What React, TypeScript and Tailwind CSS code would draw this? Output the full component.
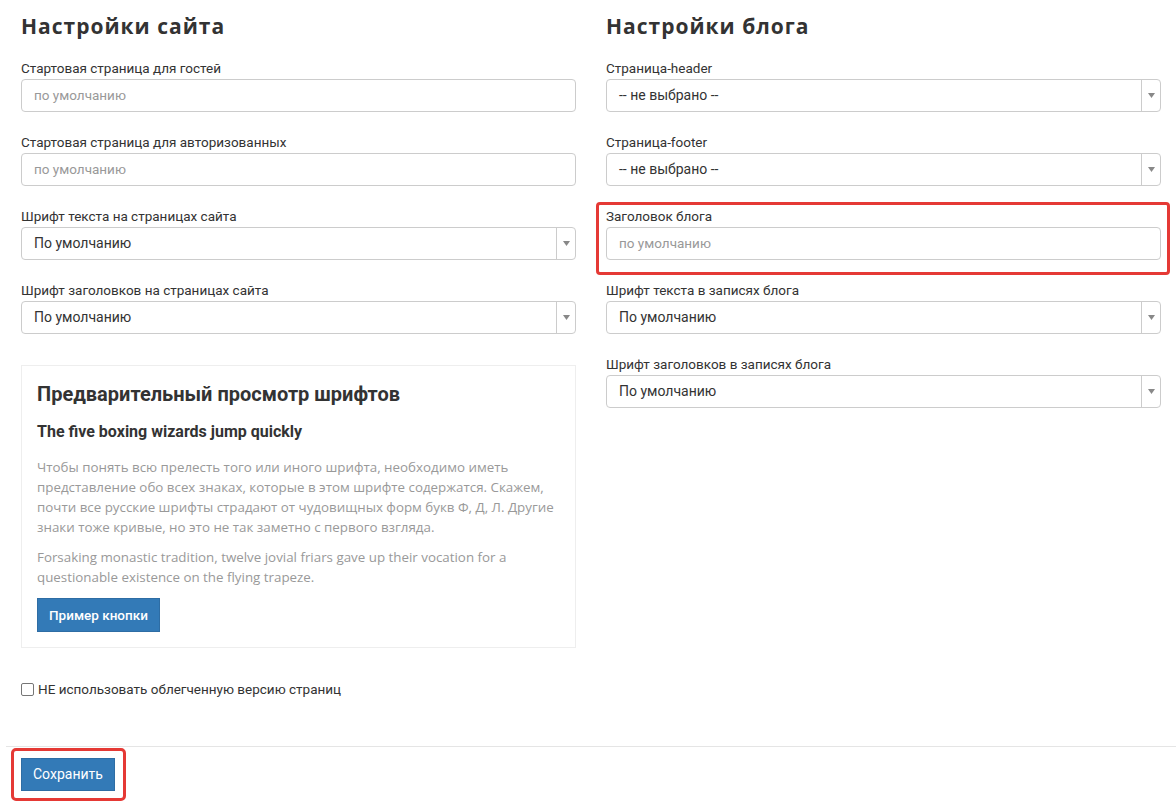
import React from "react";

const ui = "font-['Roboto','Liberation_Sans',sans-serif]";

export default function App() {
  return (
    <div className={`${ui} bg-white text-[#333] w-[1176px] min-h-[802px] pl-[6px]`}>
      <div className="flex">
        <div className="w-[585px] px-[15px]">
          <SectionTitle>Настройки сайта</SectionTitle>
          <TextField label="Стартовая страница для гостей" />
          <TextField label="Стартовая страница для авторизованных" />
          <SelectField label="Шрифт текста на страницах сайта" value="По умолчанию" />
          <SelectField label="Шрифт заголовков на страницах сайта" value="По умолчанию" />
          <FontPreview />
          <label className="flex items-center gap-[4px] mt-[32px] text-[13.5px] leading-[18px] text-[#333]">
            <span className="w-[13px] h-[13px] border border-[#767676] rounded-[2px] bg-white" />
            НЕ использовать облегченную версию страниц
          </label>
        </div>
        <div className="w-[585px] px-[15px]">
          <SectionTitle>Настройки блога</SectionTitle>
          <SelectField label="Страница-header" value="-- не выбрано --" />
          <SelectField label="Страница-footer" value="-- не выбрано --" />
          <div className="relative">
            <div className="absolute -top-[6px] -left-[10px] -right-[9px] -bottom-[15px] border-[3px] border-[#e53935] rounded-[4px] pointer-events-none" />
            <TextField label="Заголовок блога" />
          </div>
          <SelectField label="Шрифт текста в записях блога" value="По умолчанию" />
          <SelectField label="Шрифт заголовков в записях блога" value="По умолчанию" />
        </div>
      </div>
      <div className="mt-[48px] border-t border-[#e5e5e5] pt-[11px] px-[15px]">
        <div className="relative inline-block">
          <div className="absolute -top-[10px] -left-[10px] -right-[11px] -bottom-[10px] border-[3px] border-[#e53935] rounded-[5px] pointer-events-none" />
          <button className="h-[33px] px-[11px] bg-[#337ab7] border border-[#2e6da4] text-white text-[14px]">
            Сохранить
          </button>
        </div>
      </div>
    </div>
  );
}

function SectionTitle({ children }: { children: React.ReactNode }) {
  return (
    <h2 className="font-['Open_Sans',sans-serif] text-[21px] font-bold tracking-[1px] leading-[24px] pt-[14px] mb-[22px] text-[#333]">
      {children}
    </h2>
  );
}

function FieldLabel({ children }: { children: React.ReactNode }) {
  return <div className="text-[13.5px] leading-[16px] mb-[3px] text-[#333]">{children}</div>;
}

function TextField({ label }: { label: string }) {
  return (
    <div className="mb-[22px]">
      <FieldLabel>{label}</FieldLabel>
      <div className="h-[33px] border border-[#ccc] rounded-[4px] px-[12px] flex items-center text-[13.5px] text-[#999]">
        по умолчанию
      </div>
    </div>
  );
}

function SelectField({ label, value }: { label: string; value: string }) {
  return (
    <div className="mb-[22px]">
      <FieldLabel>{label}</FieldLabel>
      <div className="h-[33px] border border-[#ccc] rounded-[4px] flex items-stretch text-[14px] text-[#333]">
        <div className="flex-1 flex items-center px-[12px]">{value}</div>
        <div className="w-[19px] border-l border-[#ccc] flex items-center justify-center">
          <svg width="7" height="5" viewBox="0 0 7 5">
            <path d="M0 0H7L3.5 5Z" fill="#888" />
          </svg>
        </div>
      </div>
    </div>
  );
}

function FontPreview() {
  return (
    <div className="mt-[31px] border border-[#eee] px-[15px] pt-[14px] pb-[15px]">
      <h3 className="font-['Roboto',sans-serif] font-bold text-[20px] leading-[28px] text-[#333]">
        Предварительный просмотр шрифтов
      </h3>
      <h4 className="font-['Roboto',sans-serif] font-bold text-[16px] leading-[22px] mt-[13px] text-[#333]">
        The five boxing wizards jump quickly
      </h4>
      <div className="font-['Open_Sans',sans-serif] text-[13.35px] leading-[20px] text-[#999] mt-[14px]">
        <p>
          Чтобы понять всю прелесть того или иного шрифта, необходимо иметь представление обо всех знаках, которые в
          этом шрифте содержатся. Скажем, почти все русские шрифты страдают от чудовищных форм букв Ф, Д, Л. Другие
          знаки тоже кривые, но это не так заметно с первого взгляда.
        </p>
        <p className="mt-[10px]">
          Forsaking monastic tradition, twelve jovial friars gave up their vocation for a questionable existence on the
          flying trapeze.
        </p>
      </div>
      <button className="font-['Roboto',sans-serif] mt-[11px] h-[34px] px-[11px] bg-[#337ab7] border border-[#2e6da4] text-white text-[13.5px] font-medium">
        Пример кнопки
      </button>
    </div>
  );
}
